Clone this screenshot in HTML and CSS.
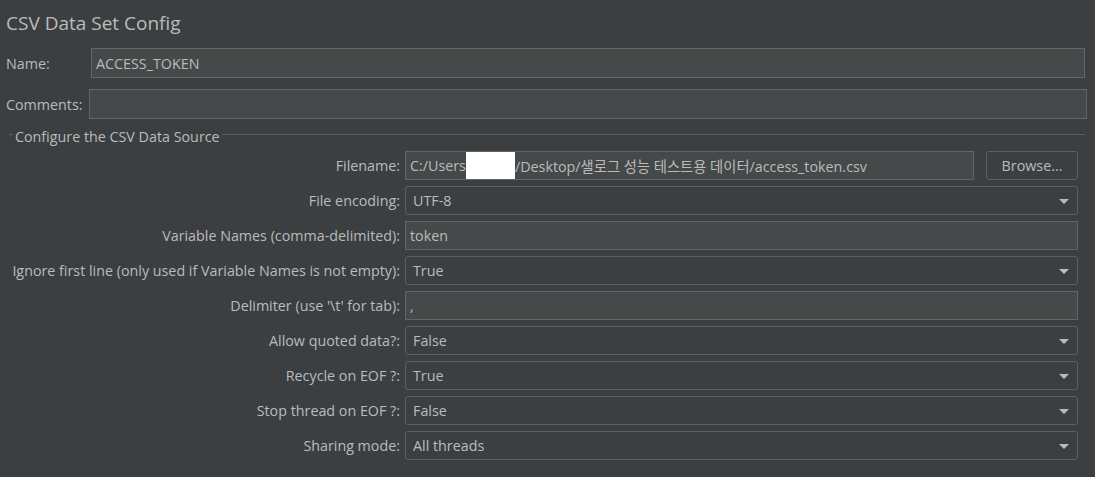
FILE: index.html
```html
<!DOCTYPE html>
<html>
<head>
<meta charset="utf-8">
<link rel="stylesheet" href="styles.css">
</head>
<body>
<div class="panel">
  <h1 class="title">CSV Data Set Config</h1>
  <div class="top-row name-row">
    <span class="top-label">Name:</span>
    <div class="tf name-field">ACCESS_TOKEN</div>
  </div>
  <div class="top-row comments-row">
    <span class="top-label">Comments:</span>
    <div class="tf comments-field"></div>
  </div>
  <div class="group">
    <div class="legend"><span class="legend-lead"></span><span class="legend-text">Configure the CSV Data Source</span><span class="legend-line"></span></div>
    <div class="form">
      <label class="lbl">Filename:</label>
      <div class="file-cell">
        <div class="tf file-field">C:/Users<span class="redact"></span>/Desktop/샐로그 성능 테스트용 데이터/access_token.csv</div>
        <button class="btn">Browse...</button>
      </div>

      <label class="lbl">File encoding:</label>
      <div class="combo"><span>UTF-8</span><i class="arrow"></i></div>

      <label class="lbl">Variable Names (comma-delimited):</label>
      <div class="tf">token</div>

      <label class="lbl">Ignore first line (only used if Variable Names is not empty):</label>
      <div class="combo"><span>True</span><i class="arrow"></i></div>

      <label class="lbl">Delimiter (use '\t' for tab):</label>
      <div class="tf">,</div>

      <label class="lbl">Allow quoted data?:</label>
      <div class="combo"><span>False</span><i class="arrow"></i></div>

      <label class="lbl">Recycle on EOF ?:</label>
      <div class="combo"><span>True</span><i class="arrow"></i></div>

      <label class="lbl">Stop thread on EOF ?:</label>
      <div class="combo"><span>False</span><i class="arrow"></i></div>

      <label class="lbl">Sharing mode:</label>
      <div class="combo"><span>All threads</span><i class="arrow"></i></div>
    </div>
  </div>
</div>
</body>
</html>
```
FILE: styles.css
```css
html, body {
  margin: 0;
  padding: 0;
  background: #3c3f41;
}
body {
  width: 1095px;
  height: 477px;
  overflow: hidden;
  font-family: "Open Sans", "Noto Sans CJK KR", sans-serif;
  font-size: 14.3px;
  color: #bbbbbb;
}
.panel {
  padding: 0 0 0 6px;
  width: 1079px;
}
.title {
  margin: 0;
  padding-top: 10px;
  height: 37px;
  box-sizing: border-box;
  font-size: 19px;
  font-weight: normal;
  line-height: 26px;
  color: #bbbbbb;
}
.top-row {
  display: flex;
  align-items: center;
}
.name-row {
  height: 30px;
  margin-top: 11px;
}
.comments-row {
  height: 30px;
  margin-top: 11px;
}
.top-label {
  flex: none;
}
.name-row .top-label { width: 85px; }
.comments-row .top-label { width: 83px; }
.tf {
  box-sizing: border-box;
  height: 30px;
  background: #45494a;
  border: 1px solid #646464;
  padding: 0 4px;
  display: flex;
  align-items: center;
  white-space: nowrap;
  overflow: hidden;
}
.name-field { flex: none; width: 994px; }
.comments-field { flex: none; width: 998px; }
.group {
  margin-top: 8px;
}
.legend {
  display: flex;
  align-items: center;
  height: 18px;
}
.legend-lead {
  width: 4px;
  height: 1px;
  margin-left: 3px;
  margin-top: -3px;
  background: #5a5d5f;
}
.legend-text {
  padding: 0 2px 0 2px;
}
.legend-line {
  flex: 1;
  height: 1px;
  margin-top: -3px;
  background: #5a5d5f;
}
.form {
  margin-top: 6px;
  display: grid;
  grid-template-columns: 394px 673px;
  column-gap: 5px;
  row-gap: 6px;
}
.form .tf { height: 29px; }
.lbl {
  text-align: right;
  align-self: center;
  white-space: nowrap;
}
.file-cell {
  display: flex;
  gap: 12px;
}
.file-field {
  width: 570px;
}
.redact {
  display: inline-block;
  flex: none;
  width: 49px;
  height: 31px;
  margin: -1px 0 -2px 0;
  align-self: flex-start;
  background: #ffffff;
}
.btn {
  flex: none;
  width: 92px;
  height: 29px;
  box-sizing: border-box;
  background: #3c3f41;
  border: 1px solid #5e6060;
  border-radius: 3px;
  color: #bbbbbb;
  font-family: inherit;
  font-size: 14.3px;
  padding: 0;
}
.combo {
  box-sizing: border-box;
  height: 29px;
  border: 1px solid #5e6060;
  border-radius: 3px;
  background: #3c3f41;
  display: flex;
  align-items: center;
  justify-content: space-between;
  padding: 0 8px 0 7px;
}
.arrow {
  width: 0;
  height: 0;
  border-left: 5px solid transparent;
  border-right: 5px solid transparent;
  border-top: 5px solid #bbbbbb;
  margin-top: 1px;
}
```
